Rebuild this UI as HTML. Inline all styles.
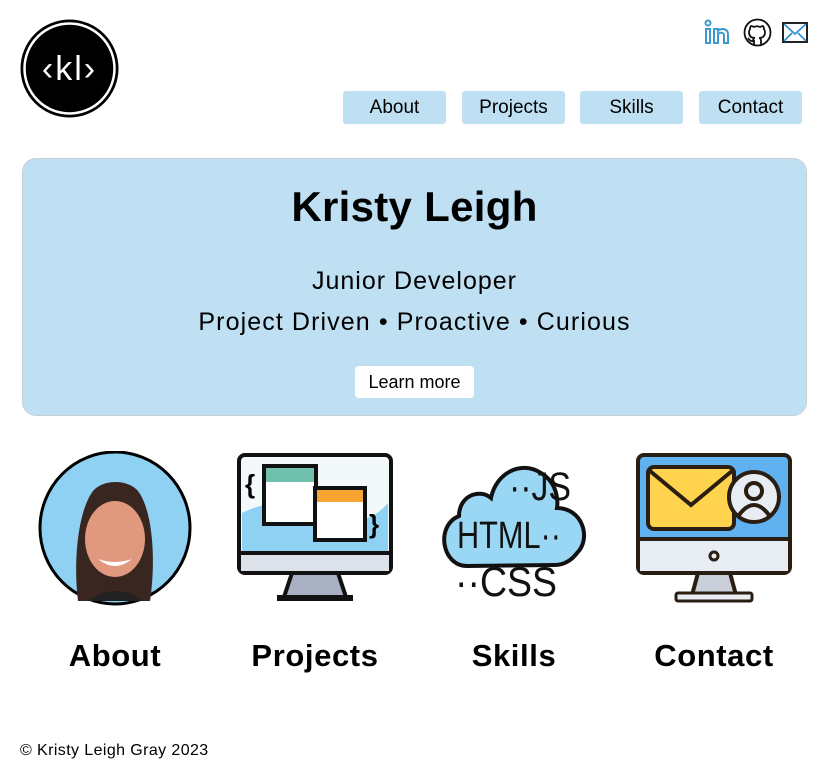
<!DOCTYPE html>
<html><head><meta charset="utf-8"><style>
*{margin:0;padding:0;box-sizing:border-box}
body{width:825px;height:774px;background:#fff;font-family:"Liberation Sans",sans-serif;position:relative;overflow:hidden;color:#000}
.abs{position:absolute}
.nav{position:absolute;top:91px;height:33px;width:103px;background:#bee0f2;border-radius:3px;font-size:19px;text-align:center;line-height:34px}
.hero{position:absolute;left:22px;top:158px;width:785px;height:258px;background:#bee0f2;border:1px solid #c8cfd4;border-radius:14px;text-align:center}
.lbl{position:absolute;top:638px;width:200px;text-align:center;font-weight:bold;font-size:31px;letter-spacing:0.6px}
</style></head><body>
<svg class="abs" style="left:19px;top:18px" width="101" height="101" viewBox="0 0 101 101">
<circle cx="50.5" cy="50.5" r="49" fill="#000"/><circle cx="50.5" cy="50.5" r="45" fill="none" stroke="#fff" stroke-width="2.5"/>
<text x="50.5" y="62" text-anchor="middle" fill="#fff" font-family="Liberation Sans" font-size="34" letter-spacing="2">‹kl›</text></svg>
<svg class="abs" style="left:704px;top:19px" width="28" height="26" viewBox="0 0 28 26" fill="none" stroke="#3b9ad0" stroke-width="2">
<circle cx="4" cy="4" r="2.5"/><path d="M2 10h4v14h-4zM10 24V10h4v2c2-3 10-3 10 3v9h-4v-8c0-3-6-3-6 0v8z"/></svg>
<svg class="abs" style="left:743px;top:18px" width="29" height="29" viewBox="0 0 29 29" fill="none" stroke="#111" stroke-width="1.8">
<circle cx="14.5" cy="14.5" r="13"/><path d="M11 27v-4c-4 1-5-2-6-3M18 27v-4c0-2-1-3-2-3 4 0 6-2 6-6 0-1-1-3-1-3 0-1 0-2-1-3-1 0-3 1-3 1-2-1-4-1-6 0 0 0-2-1-3-1-1 1-1 2-1 3 0 0-1 2-1 3 0 4 2 6 6 6-1 0-2 1-2 3"/></svg>
<svg class="abs" style="left:782px;top:22px" width="26" height="21" viewBox="0 0 26 21">
<rect x="1" y="1" width="24" height="19" fill="#fff" stroke="#222" stroke-width="2"/><path d="M2 2l11 10L24 2M2 19l8-8M24 19l-8-8" fill="none" stroke="#2a8fd0" stroke-width="1.6"/></svg>
<div class="nav" style="left:343px">About</div>
<div class="nav" style="left:462px">Projects</div>
<div class="nav" style="left:580px">Skills</div>
<div class="nav" style="left:699px">Contact</div>
<div class="hero">
<div style="position:absolute;top:24px;width:100%;font-size:42px;font-weight:bold;letter-spacing:0.3px">Kristy Leigh</div>
<div style="position:absolute;top:108px;width:100%;font-size:25px;letter-spacing:1px">Junior Developer</div>
<div style="position:absolute;top:149px;width:100%;font-size:25px;letter-spacing:1.1px">Project Driven • Proactive • Curious</div>
<div style="position:absolute;left:332px;top:207px;width:119px;height:32px;background:#fff;border-radius:4px;font-size:18px;line-height:32px">Learn more</div>
</div>
<svg class="abs" style="left:38px;top:451px" width="155" height="155" viewBox="0 0 155 155">
<ellipse cx="77" cy="77" rx="75" ry="76" fill="#8fd1f3" stroke="#000" stroke-width="3"/>
<path d="M40 150c-5-40 0-90 15-110 10-12 35-12 45 0 15 20 18 70 12 110z" fill="#3a2620"/>
<ellipse cx="77" cy="88" rx="30" ry="38" fill="#e0987e"/>
<path d="M60 108q17 14 34 0q-17 6-34 0z" fill="#fff"/>
<path d="M50 150q27-20 55 0z" fill="#222"/></svg>
<svg class="abs" style="left:237px;top:453px" width="156" height="150" viewBox="0 0 156 150">
<rect x="2" y="2" width="152" height="118" rx="6" fill="#f3f8fb" stroke="#111" stroke-width="4"/>
<path d="M5 60q40-20 80 0t66-10v50H5z" fill="#8fd1f3"/>
<rect x="4" y="100" width="148" height="18" fill="#dde2ea"/><line x1="2" y1="100" x2="154" y2="100" stroke="#111" stroke-width="4"/>
<path d="M55 120h46l8 24H47z" fill="#a9b0c2" stroke="#111" stroke-width="4"/><rect x="40" y="142" width="76" height="6" fill="#111"/>
<rect x="27" y="13" width="52" height="58" fill="#fff" stroke="#111" stroke-width="4"/><rect x="29" y="15" width="48" height="14" fill="#6fc0ad"/>
<rect x="78" y="35" width="50" height="52" fill="#fff" stroke="#111" stroke-width="4"/><rect x="80" y="37" width="46" height="12" fill="#f7a530"/>
<text x="8" y="40" font-size="26" font-weight="bold">{</text><text x="132" y="80" font-size="26" font-weight="bold">}</text></svg>
<svg class="abs" style="left:437px;top:456px" width="154" height="146" viewBox="0 0 154 146">
<path d="M30 110c-25 0-32-40-8-50 0-20 20-28 32-18 5-25 30-38 50-25 20 12 16 35 16 35 25 0 35 30 20 45-6 8-14 12-22 12z" fill="#9ad7f5" stroke="#111" stroke-width="4"/>
<g font-family="Liberation Sans" fill="#111">
<text x="72" y="44" font-size="40" textLength="62" lengthAdjust="spacingAndGlyphs">··JS</text>
<text x="20" y="92" font-size="38" textLength="104" lengthAdjust="spacingAndGlyphs">HTML··</text>
<text x="18" y="140" font-size="42" textLength="102" lengthAdjust="spacingAndGlyphs">··CSS</text></g></svg>
<svg class="abs" style="left:636px;top:453px" width="156" height="150" viewBox="0 0 156 150">
<rect x="2" y="2" width="152" height="118" rx="6" fill="#5fb1f0" stroke="#2a1d12" stroke-width="4"/>
<rect x="4" y="86" width="148" height="32" fill="#e8ecf3"/><line x1="2" y1="86" x2="154" y2="86" stroke="#2a1d12" stroke-width="4"/>
<circle cx="78" cy="103" r="4" fill="none" stroke="#2a1d12" stroke-width="3"/>
<path d="M62 120h32l6 22H56z" fill="#c9cfd9" stroke="#2a1d12" stroke-width="4"/><rect x="40" y="140" width="76" height="8" rx="2" fill="#e8ecf3" stroke="#2a1d12" stroke-width="3"/>
<rect x="12" y="14" width="86" height="62" rx="6" fill="#ffd34e" stroke="#2a1d12" stroke-width="4"/><path d="M14 18l41 34 41-34" fill="none" stroke="#2a1d12" stroke-width="4"/>
<circle cx="118" cy="44" r="25" fill="#e8ecf3" stroke="#2a1d12" stroke-width="4"/><circle cx="118" cy="38" r="8" fill="none" stroke="#2a1d12" stroke-width="4"/><path d="M103 62q15-20 30 0" fill="none" stroke="#2a1d12" stroke-width="4"/></svg>
<div class="lbl" style="left:15px">About</div>
<div class="lbl" style="left:215px">Projects</div>
<div class="lbl" style="left:414px">Skills</div>
<div class="lbl" style="left:614px">Contact</div>
<div class="abs" style="left:20px;top:742px;font-size:16px;letter-spacing:0.4px">© Kristy Leigh Gray 2023</div>
</body></html>
